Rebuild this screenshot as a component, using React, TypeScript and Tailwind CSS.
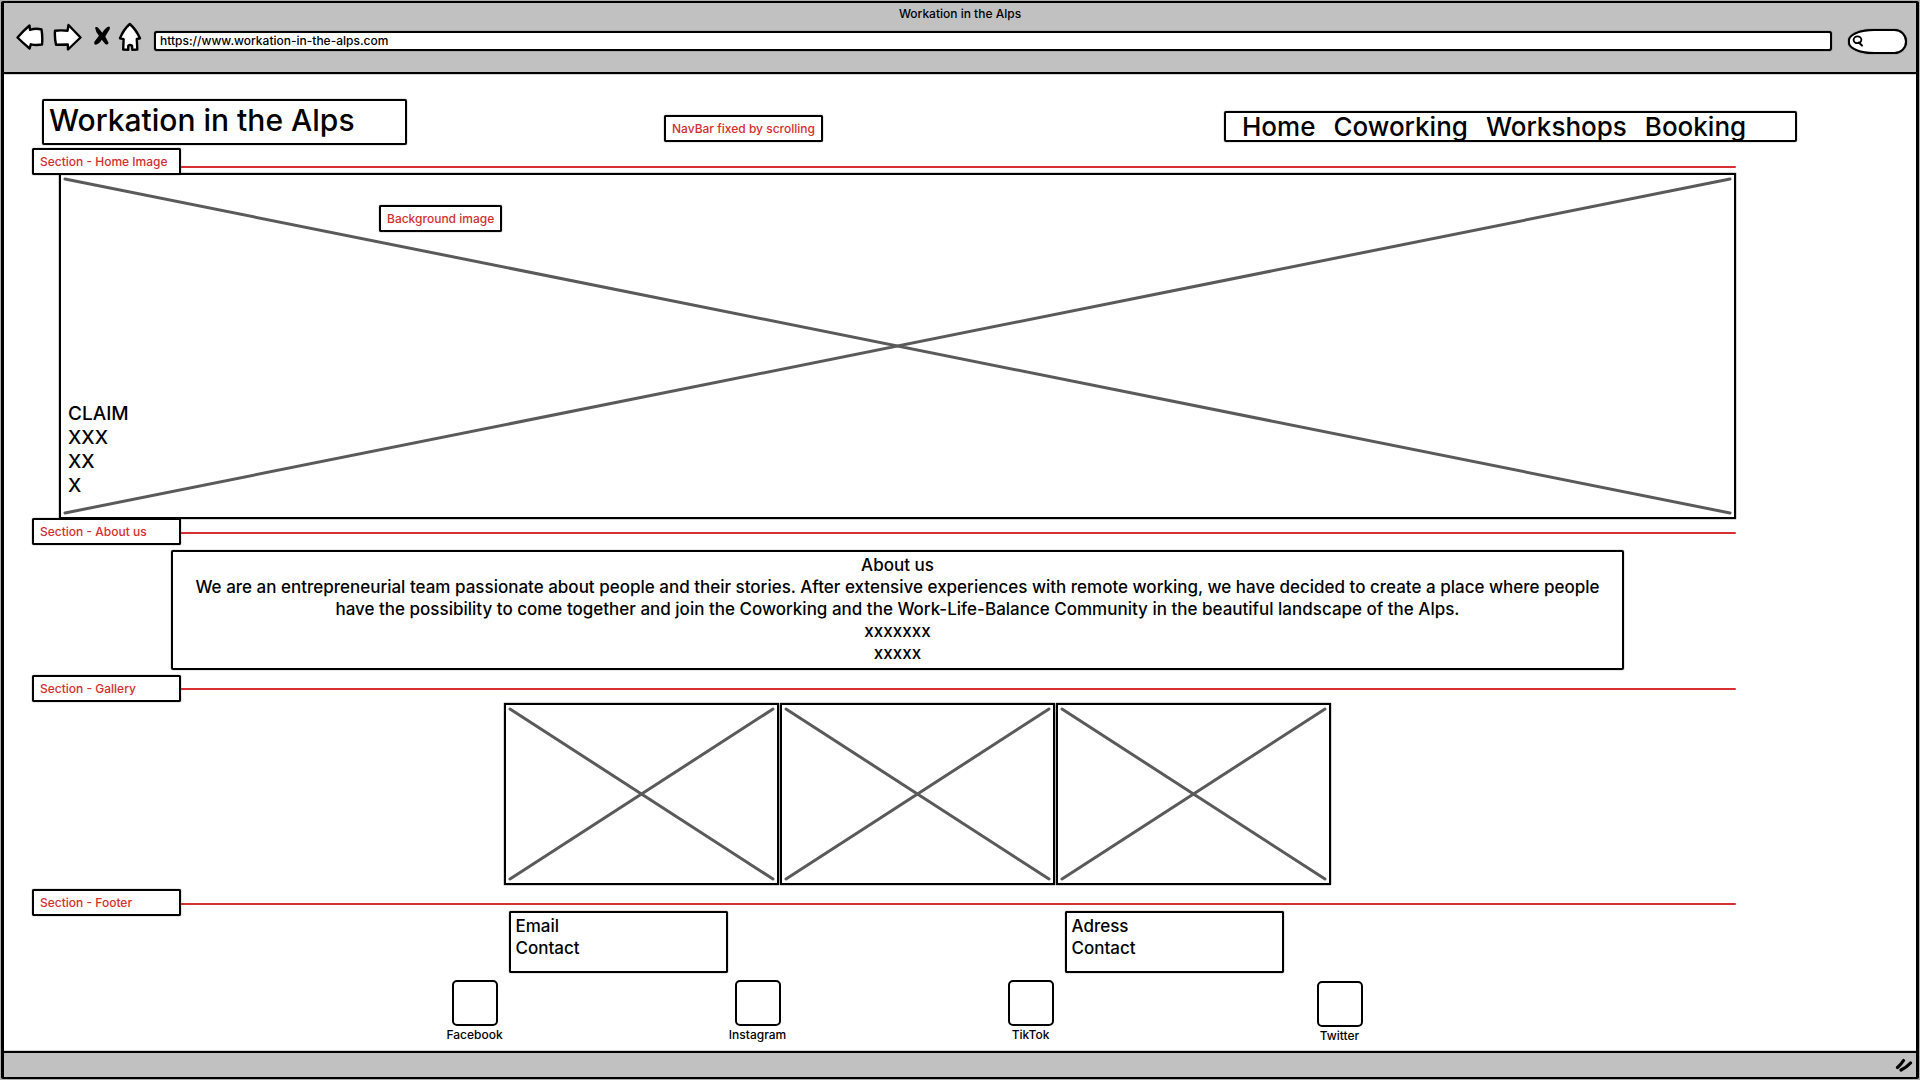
import React from "react";

const navLinks = ["Home", "Coworking", "Workshops", "Booking"];

const strokeProps = {
  fill: "#fff",
  stroke: "#000",
  strokeWidth: 2.4,
  strokeLinejoin: "round" as const,
  strokeLinecap: "round" as const,
};

function BackIcon() {
  return (
    <svg width="28" height="28" viewBox="0 0 28 28" aria-hidden="true">
      <path {...strokeProps} d="M1.500 14.500Q7 8 13.500 2.500L14 6.800Q20 5 25.500 6.500Q26.800 14 26 21.500 20 22.500 14.800 21.300L13.600 25.500Q7 20 1.500 14.500Z" />
    </svg>
  );
}

function ForwardIcon() {
  return (
    <svg width="30" height="28" viewBox="0 0 30 28" aria-hidden="true">
      <path {...strokeProps} d="M3 7.800Q9 7 15.500 7.800L16.500 2 28.500 14.500 16 26.500 15.800 21.500 4 21.800Q2.500 15 3 7.800Z" />
    </svg>
  );
}

function StopIcon() {
  return (
    <svg width="20" height="28" viewBox="0 0 20 28" aria-hidden="true">
      <path
        fill="#000"
        d="M5 4.500Q7.500 3.200 9.200 6L12.300 9.800Q15 4.800 19 3.600Q20.600 4 19.500 6.500L15.300 13.500Q17 16.800 18.600 20Q17.500 22.600 15.200 21L11.800 16.800Q9 21.500 5.500 21.800Q3.400 21 4.600 18.600L8.900 12.800Q5.800 9.500 5 4.500Z"
      />
    </svg>
  );
}

function HomeIcon() {
  return (
    <svg width="24" height="30" viewBox="0 0 24 30" aria-hidden="true">
      <path
        {...strokeProps}
        d="M11.800 2Q18 7.500 22 16.300L18.800 17 19.300 27.500 14.300 27.800 14 23.800Q11.800 22 10.300 23.800L10.200 27.700 5.200 27.600 5.600 17.200 2 16.300Q5.500 7.500 11.800 2Z"
      />
    </svg>
  );
}

function SearchIcon() {
  return (
    <svg className="shrink-0" width="12" height="12" viewBox="0 0 12 12" aria-hidden="true">
      <ellipse cx="5.500" cy="4.800" rx="3.900" ry="3.400" fill="none" stroke="#000" strokeWidth="1.800" />
      <path d="M6.800 7.500 10 10.500" stroke="#000" strokeWidth="2" strokeLinecap="round" />
    </svg>
  );
}

function ResizeGrip() {
  return (
    <svg width="18" height="14" viewBox="0 0 18 14" aria-hidden="true">
      <path d="M2.500 9.500Q6 6.500 8.500 2.500M6 12Q12 9 15.500 5" fill="none" stroke="#000" strokeWidth="3.200" strokeLinecap="round" />
    </svg>
  );
}

function Tag({ children }: { children: React.ReactNode }) {
  return (
    <p className="flex h-[27px] items-center rounded-[2px] border-2 border-black bg-white px-[6px] text-xs whitespace-nowrap text-[#d32f2f] shadow-[0_0_1px_#000]">
      {children}
    </p>
  );
}

function SectionHeading({ title, line = "" }: { title: string; line?: string }) {
  return (
    <div className="relative z-10 flex items-center">
      <h2 className="flex h-[27px] w-[149px] shrink-0 items-center rounded-[2px] border-2 border-black bg-white px-[6px] text-xs text-[#d32f2f] shadow-[0_0_1px_#000]">
        {title}
      </h2>
      <div className={`h-[2px] flex-1 rounded-r-full bg-[#d83030] ${line}`} />
    </div>
  );
}

function Placeholder({ label }: { label: string }) {
  return (
    <svg role="img" aria-label={label} className="h-full w-full overflow-visible" preserveAspectRatio="none" viewBox="0 0 100 100">
      <path
        d="M0 0 100 100M100 0 0 100"
        fill="none"
        stroke="#5a5a5a"
        strokeWidth="3"
        strokeLinecap="round"
        vectorEffect="non-scaling-stroke"
      />
    </svg>
  );
}

function ContactCard({ title }: { title: string }) {
  return (
    <div className="h-[62px] w-[219px] rounded-[2px] border-2 border-black bg-white px-[5px] py-[2px] text-[17px] leading-[22px] shadow-[0_0_1px_#000]">
      <p>{title}</p>
      <p>Contact</p>
    </div>
  );
}

function Social({ name }: { name: string }) {
  return (
    <a href="#" className="flex w-[60px] flex-col items-center text-xs leading-[18px]">
      <span className="h-[46px] w-[46px] rounded-[5px] border-2 border-black" />
      {name}
    </a>
  );
}

export default function App() {
  return (
    <div className="flex min-h-screen flex-col bg-[#b0b0b0] p-px font-['Inter',sans-serif] font-medium text-black">
      <div className="flex flex-1 flex-col rounded-[2px] border-x-[3px] border-y-2 border-black bg-white">
        <header className="h-[71px] border-b-2 border-black bg-[#c1c1c1] shadow-[0_0_1px_#000]">
          <p className="pt-px text-center text-xs leading-5">Workation in the Alps</p>
          <div className="flex h-[34px] items-center pr-[9px] pl-3">
            <div className="flex items-center gap-2 pb-2">
              <button type="button" aria-label="Back"><BackIcon /></button>
              <button type="button" aria-label="Forward"><ForwardIcon /></button>
              <button type="button" aria-label="Stop"><StopIcon /></button>
              <button type="button" aria-label="Home"><HomeIcon /></button>
            </div>
            <input
              type="text"
              aria-label="Address"
              defaultValue="https://www.workation-in-the-alps.com"
              className="ml-3 h-5 min-w-0 flex-1 rounded-[3px] border-2 border-black bg-white px-1 pb-px text-xs shadow-[0_0_1px_#000] outline-none"
            />
            <label className="ml-4 flex h-[25px] w-[59px] items-center rounded-[50%/50%] rounded-r-[14px] border-2 border-black bg-white pl-[2px] shadow-[0_0_1px_#000]">
              <SearchIcon />
              <input type="search" aria-label="Search" className="w-full min-w-0 bg-transparent text-xs outline-none" />
            </label>
          </div>
        </header>

        <main className="flex flex-1 flex-col pt-[25px] pl-7">
          <div className="flex items-end pr-[119px] pl-[10px]">
            <h1 className="h-[46px] w-[365px] rounded-[2px] border-2 border-black px-[5px] text-[30px] leading-[38px] whitespace-nowrap shadow-[0_0_1px_#000]">
              Workation in the Alps
            </h1>
            <div className="mb-[3px] ml-[257px]">
              <Tag>NavBar fixed by scrolling</Tag>
            </div>
            <nav className="mb-[3px] ml-auto flex h-[31px] w-[573px] items-center gap-[18px] rounded-[2px] border-2 border-black px-4 text-[26px] leading-7 shadow-[0_0_1px_#000]">
              {navLinks.map((link) => (
                <a key={link} href="#">{link}</a>
              ))}
            </nav>
          </div>

          <div className="mt-[3px] pr-[180px]">
            <section>
              <SectionHeading title="Section - Home Image" line="mt-[10px]" />
              <div className="relative -mt-[2px] ml-[27px] h-[346px] border-2 border-black p-1 shadow-[0_0_1px_#000]">
                <Placeholder label="Background image" />
                <div className="absolute top-[30px] left-[318px]">
                  <Tag>Background image</Tag>
                </div>
                <div className="absolute bottom-[19px] left-[7px] text-[19px] leading-6">
                  <p>CLAIM</p>
                  <p>XXX</p>
                  <p>XX</p>
                  <p>X</p>
                </div>
              </div>
            </section>

            <section className="-mt-px">
              <SectionHeading title="Section - About us" line="mt-[2px]" />
              <div className="mt-[5px] mr-[112px] ml-[139px] h-[120px] rounded-[2px] border-2 border-black px-3 pt-[2px] text-center text-[17px] leading-[22px] shadow-[0_0_1px_#000]">
                <h3>About us</h3>
                <p>
                  We are an entrepreneurial team passionate about people and their stories. After extensive experiences with
                  remote working, we have decided to create a place where people have the possibility to come together and
                  join the Coworking and the Work-Life-Balance Community in the beautiful landscape of the Alps.
                </p>
                <p>xxxxxxx</p>
                <p>xxxxx</p>
              </div>
            </section>

            <section className="mt-[5px]">
              <SectionHeading title="Section - Gallery" />
              <div className="mt-px flex justify-center gap-px pl-[66px]">
                {["First", "Second", "Third"].map((item) => (
                  <div key={item} className="h-[182px] w-[275px] border-2 border-black p-1 shadow-[0_0_1px_#000]">
                    <Placeholder label={`${item} gallery image`} />
                  </div>
                ))}
              </div>
            </section>

            <footer className="mt-1">
              <SectionHeading title="Section - Footer" line="mt-[2px]" />
              <div className="relative z-10 -mt-[5px] flex justify-center gap-[337px] pl-[24px]">
                <ContactCard title="Email" />
                <ContactCard title="Adress" />
              </div>
              <div className="mt-[7px] flex justify-center pl-[46px]">
                <Social name="Facebook" />
                <div className="ml-[223px]"><Social name="Instagram" /></div>
                <div className="ml-[213px]"><Social name="TikTok" /></div>
                <div className="ml-[249px] pt-px"><Social name="Twitter" /></div>
              </div>
            </footer>
          </div>
        </main>

        <div className="flex h-[26px] items-center justify-end border-t-2 border-black bg-[#c1c1c1] pr-[3px] shadow-[0_0_1px_#000]">
          <ResizeGrip />
        </div>
      </div>
    </div>
  );
}
